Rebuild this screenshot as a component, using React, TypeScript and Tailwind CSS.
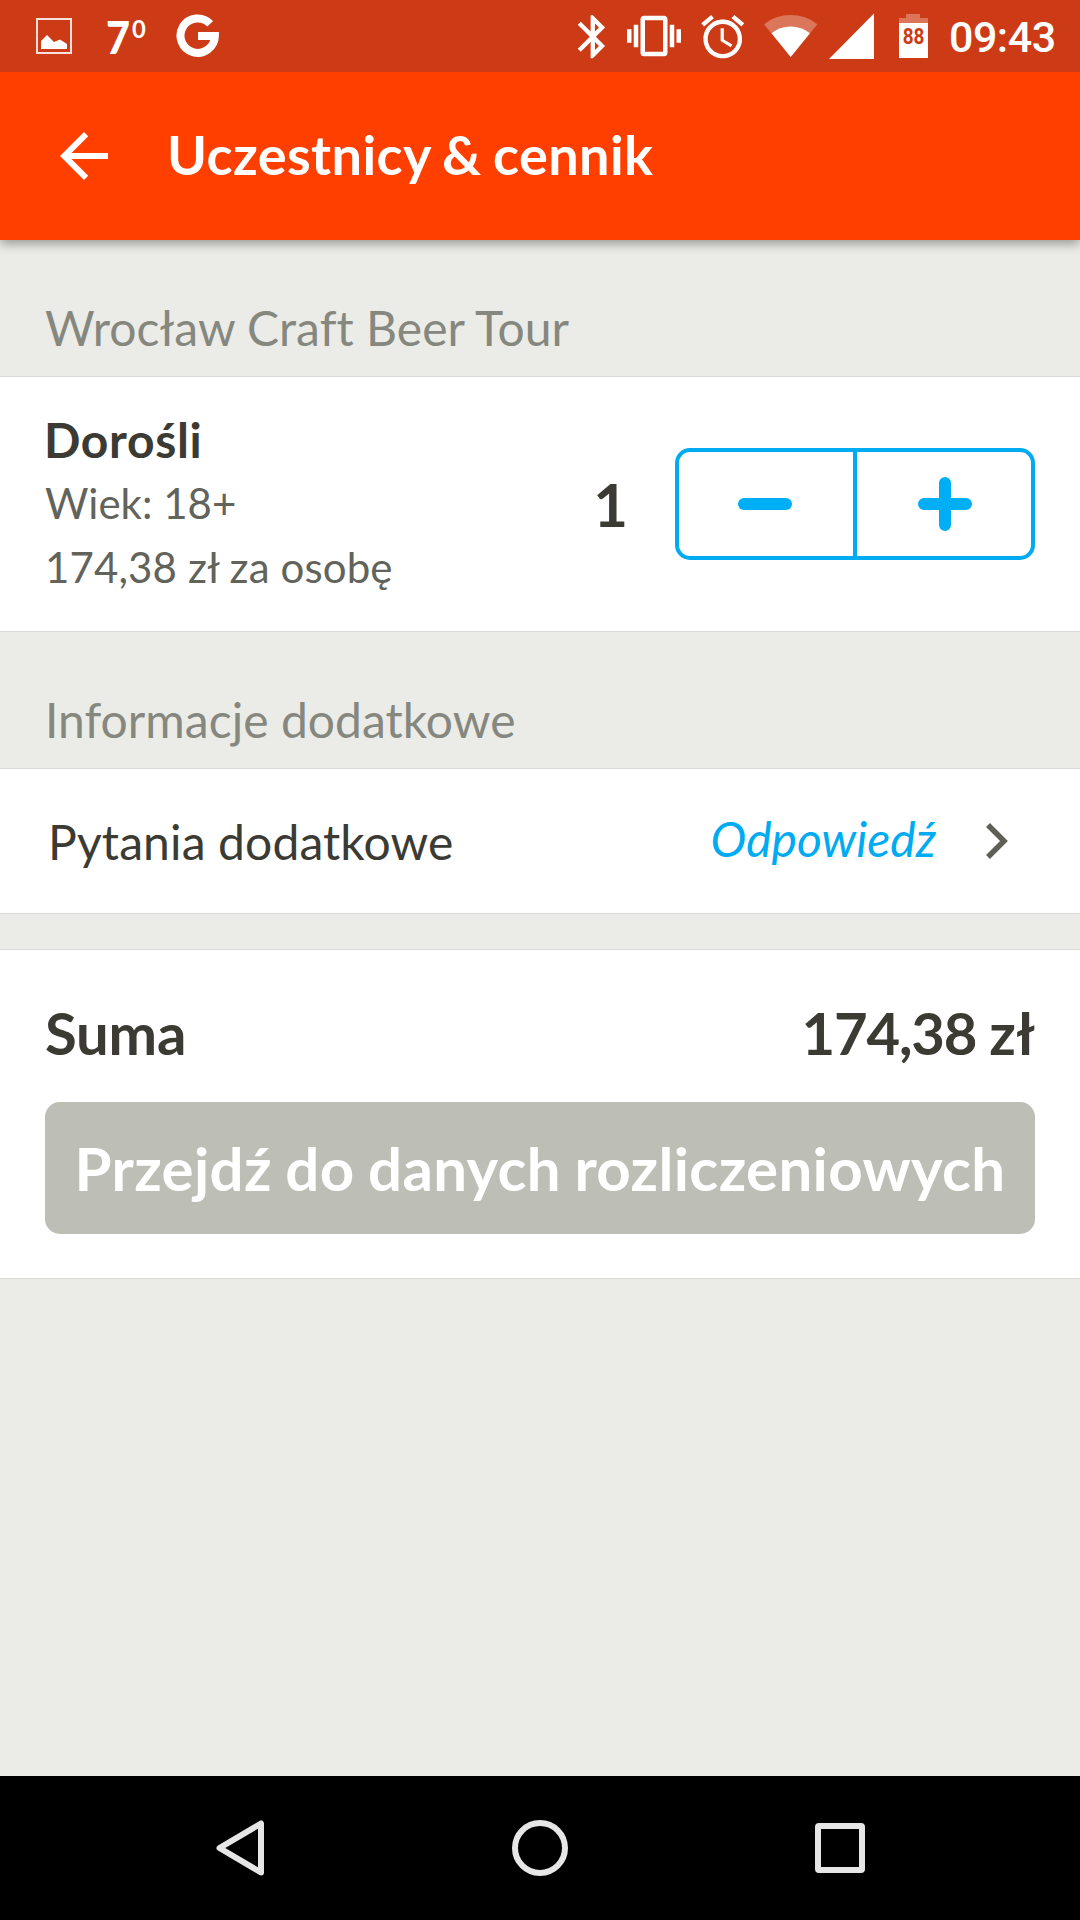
import React from "react";

function Icon({ d, className }: { d: string; className: string }) {
  return (
    <svg viewBox="0 0 24 24" fill="currentColor" className={className}>
      <path d={d} />
    </svg>
  );
}

const BLUETOOTH =
  "M17.71 7.71L12 2h-1v7.59L6.41 5 5 6.41 10.59 12 5 17.59 6.41 19 11 14.41V22h1l5.71-5.71-4.3-4.29 4.3-4.29zM13 5.83l1.88 1.88L13 9.59V5.83zm1.88 10.46L13 18.17v-3.76l1.88 1.88z";
const VIBRATE =
  "M0 15h2V9H0v6zm3 2h2V7H3v10zm19-8v6h2V9h-2zm-3 8h2V7h-2v10zM16.5 3h-9C6.67 3 6 3.67 6 4.5v15c0 .83.67 1.5 1.5 1.5h9c.83 0 1.5-.67 1.5-1.5v-15c0-.83-.67-1.5-1.5-1.5zM16 19H8V5h8v14z";
const ALARM =
  "M22 5.72l-4.6-3.86-1.29 1.53 4.6 3.86L22 5.72zM7.88 3.39L6.6 1.86 2 5.71l1.29 1.53 4.59-3.85zM12.5 8H11v6l4.75 2.85.75-1.23-4-2.37V8zM12 4c-4.97 0-9 4.03-9 9s4.02 9 9 9c4.97 0 9-4.03 9-9s-4.03-9-9-9zm0 16c-3.87 0-7-3.13-7-7s3.13-7 7-7 7 3.13 7 7-3.13 7-7 7z";
const BACK = "M20 11H7.83l5.59-5.59L12 4l-8 8 8 8 1.41-1.41L7.83 13H20v-2z";

function StatusBar() {
  return (
    <div className="relative z-10 flex h-[72px] items-start bg-[#cc3b15] text-white">
      <svg viewBox="0 0 36 36" className="mt-[18px] ml-9 size-9">
        <rect x="1" y="1" width="34" height="34" fill="none" stroke="#fff" strokeOpacity=".85" strokeWidth="2" />
        <path d="M5 31v-8l6-6 7 7 6-2.500 7 4.500v5z" fill="#fff" />
      </svg>
      <div className="ml-[34px] flex h-[72px] w-[70px] items-start font-['Lato'] font-bold">
        <span className="w-[26px] origin-left scale-x-90 text-[46px] leading-[73px] font-black">7</span>
        <span className="mt-[13px] origin-left scale-x-95 text-[25px] leading-[30px]">0</span>
      </div>
      <svg viewBox="176 14 44 44" className="mt-[14px] size-[44px]">
        <path d="M210.200 23.800A17.200 17.200 0 1 0 214.900 36H198" fill="none" stroke="#fff" strokeWidth="8" />
      </svg>
      <Icon d={BLUETOOTH} className="mt-[10.5px] ml-[347px] size-[51.600px]" />
      <Icon d={VIBRATE} className="mt-[9px] ml-[8.400px] size-[54px]" />
      <Icon d={ALARM} className="mt-[10.5px] ml-[16px] size-[51.500px]" />
      <svg viewBox="764 14 54 44" className="mt-[14px] ml-[15.500px] h-[44px] w-[54px]">
        <path d="M790.700 57L764 24.200a43 43 0 0 1 53.400 0z" fill="#fff" fillOpacity=".3" />
        <path d="M790.700 57L771.500 33.200a31 31 0 0 1 38.400 0z" fill="#fff" />
      </svg>
      <svg viewBox="0 0 46 46" className="mt-[13px] ml-[11px] size-[46px]">
        <path d="M0 46H45V.5z" fill="#fff" />
      </svg>
      <div className="mt-[14px] ml-6 flex h-[44px] w-[29px] flex-col items-center">
        <div className="h-1 w-[14px] bg-white/30" />
        <div className="h-[5px] w-full bg-white/30" />
        <div className="flex h-[35px] w-full justify-center bg-white font-['Roboto'] text-[22px] leading-[27px] font-bold text-[#cc3b15]">
          <span className="scale-x-[0.86] text-center">88</span>
        </div>
      </div>
      <span className="ml-[21px] font-['Roboto'] text-[43px] leading-[74px] font-medium tracking-[-0.500px]">09:43</span>
    </div>
  );
}

function GroupTitle({ children }: { children: React.ReactNode }) {
  return (
    <h2 className="flex h-[136px] items-end px-[45px] pb-[19px] text-[48px] leading-[58px] tracking-[0.030px] text-[#86877f]">
      {children}
    </h2>
  );
}

function Stepper() {
  return (
    <div className="flex h-[112px] w-[360px] rounded-[15px] border-4 border-[#00abf1]">
      <button className="flex w-[174px] items-center justify-center pr-[2px]" aria-label="minus">
        <span className="h-3 w-[54px] rounded-full bg-[#00aef5]" />
      </button>
      <span className="w-1 bg-[#00abf1]" />
      <button className="flex w-[174px] items-center justify-center pl-[2px] text-[#00aef5]" aria-label="plus">
        <svg viewBox="0 0 54 54" className="size-[54px]" stroke="currentColor" strokeWidth="12" strokeLinecap="round">
          <path d="M6 27H48M27 6V48" />
        </svg>
      </button>
    </div>
  );
}

export default function App() {
  return (
    <div className="flex h-[1920px] w-[1080px] flex-col overflow-hidden bg-[#ebece7] font-['Lato',sans-serif] text-[#3b3b33]">
      <StatusBar />
      <header className="relative flex h-[168px] items-center bg-[#ff3f00] text-white shadow-[0_4px_10px_rgba(0,0,0,0.35)]">
        <Icon d={BACK} className="ml-12 size-[72px]" />
        <h1 className="ml-[47px] pb-[2px] text-[54px] leading-[64px] font-bold tracking-[0.400px] [word-spacing:-2px]">
          Uczestnicy &amp; cennik
        </h1>
      </header>

      <GroupTitle>Wrocław Craft Beer Tour</GroupTitle>
      <section className="flex h-[256px] items-center border-y border-[#d9dad6] bg-white px-[45px]">
        <div className="flex-1 pb-[2px]">
          <div className="-ml-px text-[48px] leading-[63px] font-bold tracking-[0.650px]">Dorośli</div>
          <div className="text-[42px] leading-[64px] text-[#62635b]">Wiek: 18+</div>
          <div className="text-[42px] leading-[64px] tracking-[0.120px] text-[#62635b]">174,38 zł za osobę</div>
        </div>
        <span className="mr-[47px] text-[60px] leading-[72px] font-bold">1</span>
        <Stepper />
      </section>

      <GroupTitle>Informacje dodatkowe</GroupTitle>
      <section className="flex h-[146px] items-center border-y border-[#d9dad6] bg-white px-12">
        <span className="flex-1 pt-[2px] text-[48px] leading-[58px] tracking-[0.120px]">Pytania dodatkowe</span>
        <span className="mr-[49px] pb-[4px] text-[48px] leading-[58px] text-[#00abf1] italic">Odpowiedź</span>
        <svg viewBox="0 0 24 38" className="mr-[23px] h-[38px] w-6" fill="none" stroke="#605f57" strokeWidth="5.500">
          <path d="M3 3L19 19L3 35" />
        </svg>
      </section>

      <section className="mt-[35px] h-[330px] border-y border-[#d9dad6] bg-white px-[45px] pt-[46px]">
        <div className="flex justify-between text-[58px] leading-[74px] font-bold">
          <span className="tracking-[-0.200px]">Suma</span>
          <span className="[word-spacing:-1px]">
            <span className="tracking-[-1.200px]">174,38</span> zł
          </span>
        </div>
        <button className="mt-8 flex h-[132px] w-full justify-center rounded-[15px] bg-[#bdbeb5] text-[60px] leading-[132px] font-bold tracking-[0.350px] whitespace-nowrap text-white [word-spacing:-1.500px]">
          Przejdź do danych rozliczeniowych
        </button>
      </section>

      <nav className="mt-auto flex h-[144px] items-center bg-black">
        <svg viewBox="0 0 50 56" className="ml-[215px] h-14 w-[50px]" fill="none" stroke="#e6e6e6" strokeWidth="6" strokeLinejoin="round">
          <path d="M46 3.500V52.500L4.500 28z" />
        </svg>
        <span className="ml-[247px] size-14 rounded-full border-[6px] border-[#e6e6e6]" />
        <span className="ml-[247px] size-[50px] rounded-[4px] border-[6px] border-[#e6e6e6]" />
      </nav>
    </div>
  );
}
